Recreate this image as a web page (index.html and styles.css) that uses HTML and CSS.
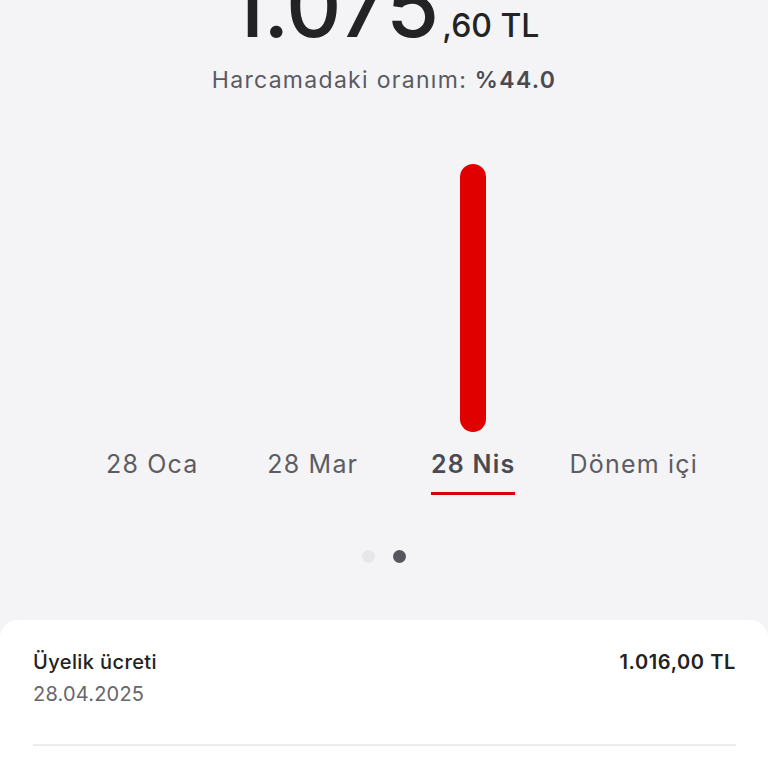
FILE: index.html
```html
<!DOCTYPE html>
<html lang="tr">
<head>
    <meta charset="UTF-8">
    <meta name="viewport" content="width=device-width, initial-scale=1.0">
    <title>Harcamalar</title>
    <link rel="stylesheet" href="styles.css">
</head>
<body>
    <!-- Toplam tutar -->
    <div class="total">
        <span class="total-main">1.075</span><span class="total-cents">,60 TL</span>
    </div>
    <p class="ratio">Harcamadaki oranım: <b>%44.0</b></p>

    <!-- Dönem grafiği -->
    <div class="chart">
        <div class="col">
            <div class="bar-area"></div>
            <span class="label">28 Oca</span>
        </div>
        <div class="col">
            <div class="bar-area"></div>
            <span class="label">28 Mar</span>
        </div>
        <div class="col active">
            <div class="bar-area"><div class="bar" style="height: 268px"></div></div>
            <span class="label">28 Nis</span>
        </div>
        <div class="col">
            <div class="bar-area"></div>
            <span class="label">Dönem içi</span>
        </div>
    </div>

    <div class="dots">
        <span class="dot"></span>
        <span class="dot on"></span>
    </div>

    <!-- İşlem listesi -->
    <div class="card">
        <div class="row">
            <div>
                <div class="row-title">Üyelik ücreti</div>
                <div class="row-date">28.04.2025</div>
            </div>
            <div class="row-amount">1.016,00 TL</div>
        </div>
        <div class="divider"></div>
    </div>
</body>
</html>
```

FILE: styles.css
```css
body {
    font-family: 'Inter', 'Noto Sans', sans-serif;
    margin: 0;
    padding: 0;
    background: #f4f4f6;
    color: #222;
    overflow: hidden;
}

.total {
    text-align: center;
    margin-top: -34px;
    height: 80px;
    line-height: 80px;
    white-space: nowrap;
}

.total-main {
    font-size: 86px;
    font-weight: 500;
    letter-spacing: -1px;
    color: #232325;
}

.total-cents {
    font-size: 32px;
    font-weight: 500;
    margin-left: 4px;
    color: #232325;
}

.ratio {
    text-align: center;
    margin: 20px 0 0;
    font-size: 23px;
    color: #5a5a60;
    letter-spacing: 1.3px;
}

.ratio b {
    font-weight: 600;
    color: #4a4a50;
}

.chart {
    display: grid;
    grid-template-columns: repeat(4, 1fr);
    padding: 0 54px 0 72px;
    margin-top: 70px;
}

.col {
    display: flex;
    flex-direction: column;
    align-items: center;
}

.bar-area {
    height: 268px;
    display: flex;
    align-items: flex-end;
}

.bar {
    width: 26px;
    background: #e10000;
    border-radius: 13px;
}

.label {
    margin-top: 17px;
    font-size: 25px;
    color: #5c5c62;
    padding-bottom: 13px;
    border-bottom: 3px solid transparent;
    letter-spacing: 1.2px;
}

.active .label {
    font-weight: 600;
    color: #4a4a50;
    border-bottom-color: #d8000c;
}

.dots {
    display: flex;
    justify-content: center;
    gap: 18px;
    margin-top: 55px;
}

.dot {
    width: 13px;
    height: 13px;
    border-radius: 50%;
    background: #e7e7ea;
}

.dot.on {
    background: #56565c;
}

.card {
    background: #fff;
    border-radius: 18px 18px 0 0;
    margin-top: 57px;
    padding: 30px 32px 0 33px;
    height: 120px;
}

.row {
    display: flex;
    justify-content: space-between;
    align-items: flex-start;
}

.row-title {
    font-size: 20px;
    font-weight: 500;
    color: #222;
    letter-spacing: 0.4px;
}

.row-date {
    font-size: 20px;
    color: #66666c;
    margin-top: 8px;
    letter-spacing: 0.2px;
}

.row-amount {
    font-size: 20px;
    font-weight: 600;
    color: #222;
    letter-spacing: 0.6px;
}

.divider {
    height: 2px;
    background: #ececee;
    margin-top: 38px;
}
```
